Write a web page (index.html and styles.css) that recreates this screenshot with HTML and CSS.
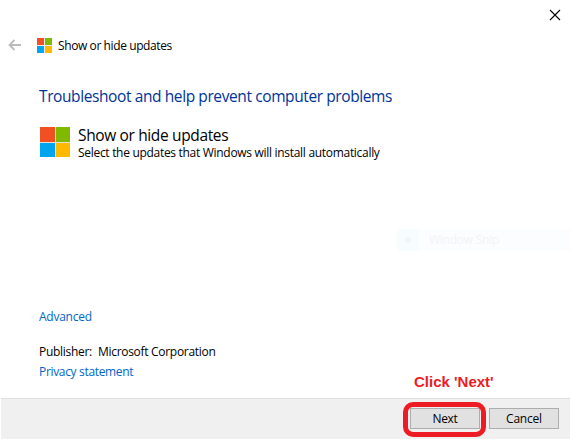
FILE: index.html
```html
<!DOCTYPE html>
<html lang="en">
<head>
<meta charset="utf-8">
<title>Show or hide updates</title>
<link rel="stylesheet" href="styles.css">
</head>
<body>
<div class="dialog">
  <div class="titlebar">
    <svg class="close" width="12" height="12" viewBox="0 0 12 12"><path d="M1 1 11 11M11 1 1 11"/></svg>
  </div>
  <header class="header">
    <svg class="back" width="14" height="12" viewBox="0 0 14 12"><path d="M1.5 6H13M6.5 1 1.5 6 6.5 11"/></svg>
    <span class="logo small"><i class="red"></i><i class="green"></i><i class="blue"></i><i class="yellow"></i></span>
    <span class="caption">Show or hide updates</span>
  </header>
  <main class="content">
    <h1 class="heading"><span>Troubleshoot and help prevent computer problems</span></h1>
    <section class="tool">
      <span class="logo large"><i class="red"></i><i class="green"></i><i class="blue"></i><i class="yellow"></i></span>
      <div class="details">
        <div class="name"><span>Show or hide updates</span></div>
        <div class="description"><span>Select the updates that Windows will install automatically</span></div>
      </div>
    </section>
    <div class="advanced link"><span>Advanced</span></div>
    <div class="publisher"><span class="label">Publisher:</span><span class="company">Microsoft Corporation</span></div>
    <div class="privacy link"><span>Privacy statement</span></div>
  </main>
  <footer class="footer">
    <button class="button next"><span>Next</span></button>
    <button class="button cancel"><span>Cancel</span></button>
  </footer>
  <div class="ghost"><span class="ghost-icon"></span><span class="ghost-text">Window Snip</span></div>
  <div class="callout">Click 'Next'</div>
  <div class="ring"></div>
</div>
</body>
</html>
```
FILE: styles.css
```css
* { box-sizing: border-box; }
body { margin: 0; background: #fff; font: 12px/16px "Open Sans", "Noto Sans", sans-serif; color: #000; }
.dialog { position: relative; width: 571px; height: 440px; display: flex; flex-direction: column; padding: 0 1px 1px; overflow: hidden; white-space: nowrap; }
.titlebar { height: 30px; display: flex; justify-content: flex-end; padding: 9px 9px 0 0; }
.close path { stroke: #000; stroke-width: 1.1; fill: none; }
.header { height: 30px; display: flex; align-items: center; padding-left: 7px; }
.back path { stroke: #bcbcbc; stroke-width: 1.8; fill: none; }
.logo { display: grid; grid-template-columns: 1fr 1fr; flex: none; }
.small { width: 15px; height: 15px; gap: 1px; margin-left: 15px; background: #eee; }
.large { width: 30px; height: 30px; gap: 1px; margin-top: 3px; background: #e4e0d4; }
.red { background: #f25022; }
.green { background: #7fba00; }
.blue { background: #00a4ef; }
.yellow { background: #ffb900; }
.caption { margin: 2px 0 0 6px; letter-spacing: -0.4px; }
.content { flex: 1; padding: 24px 38px 0; }
.heading { margin: 0; font-size: 15.5px; font-weight: 400; line-height: 24px; color: #003399; letter-spacing: -0.4px; }
.tool { display: flex; gap: 8px; margin-top: 16px; margin-left: 1px; }
.name { font-size: 15.5px; line-height: 22px; letter-spacing: -0.36px; }
.description { line-height: 14px; letter-spacing: -0.3px; }
.link { color: #0066cc; letter-spacing: -0.25px; }
.advanced { margin-top: 149px; }
.publisher { display: flex; margin-top: 19px; letter-spacing: -0.3px; }
.label { width: 59px; }
.privacy { margin-top: 4px; letter-spacing: -0.33px; }
.footer { flex: none; height: 41px; display: flex; justify-content: flex-end; gap: 9px; padding: 9px 11px 0 0; background: #f0f0f0; border-top: 1px solid #dfdfdf; }
.button { width: 70px; height: 21px; padding: 0; border: 1px solid #adadad; background: #e1e1e1; font: inherit; line-height: 18px; color: #000; letter-spacing: -0.2px; }
.next { letter-spacing: -0.35px; }
.ghost { position: absolute; left: 397px; top: 229px; width: 173px; height: 22px; display: flex; align-items: center; background: #fbfdff; color: #f3f4f6; }
.ghost-icon { width: 22px; height: 22px; background: radial-gradient(circle at 50% 50%, #f2f4f6 0 3px, #f7fcff 3.5px); }
.ghost-text { margin-left: 10px; letter-spacing: -0.25px; }
.callout { position: absolute; left: 414px; top: 373px; font: bold 15px/18px "Liberation Sans", sans-serif; color: #ed1c24; }
.ring { position: absolute; left: 403px; top: 402px; width: 83px; height: 35px; border: 5px solid #ed1c24; border-radius: 10px; }
```
